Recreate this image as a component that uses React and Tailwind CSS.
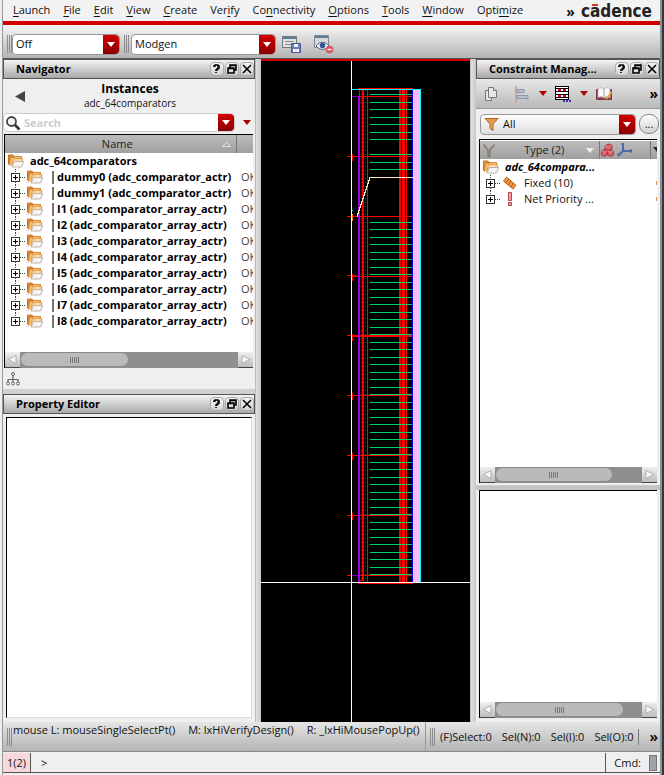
import React from "react";

const MENUS = [
  ["", "L", "aunch"],
  ["", "F", "ile"],
  ["", "E", "dit"],
  ["", "V", "iew"],
  ["", "C", "reate"],
  ["Ver", "i", "fy"],
  ["Co", "n", "nectivity"],
  ["", "O", "ptions"],
  ["", "T", "ools"],
  ["", "W", "indow"],
  ["Opti", "m", "ize"],
];

const INSTANCES = [
  "dummy0 (adc_comparator_actr)",
  "dummy1 (adc_comparator_actr)",
  "I1 (adc_comparator_array_actr)",
  "I2 (adc_comparator_array_actr)",
  "I3 (adc_comparator_array_actr)",
  "I4 (adc_comparator_array_actr)",
  "I5 (adc_comparator_array_actr)",
  "I6 (adc_comparator_array_actr)",
  "I7 (adc_comparator_array_actr)",
  "I8 (adc_comparator_array_actr)",
];

function Folder() {
  return (
    <svg width="16" height="14" viewBox="0 0 16 14" className="shrink-0" aria-hidden="true">
      <path d="M.5 10.500V1h4.500l1 1.500h6.500v3" fill="#e0903a" stroke="#bf7424" />
      <path d="M1.500 11.500 2.500 3.500H6l1-1h6.500V6.500" fill="#fbc67c" stroke="#d0842f" />
      <path d="M3.500 12 5.500 5l1-.500h8V8" fill="#fdd9a3" stroke="#d48b3a" strokeWidth=".8" />
      <path d="M4 13 6.500 7.500h9L13.500 13z" fill="#f6f4f2" stroke="#b5aca2" strokeWidth=".9" />
    </svg>
  );
}

function Expander({ last = false }) {
  return (
    <button type="button" aria-label="Expand" className="block h-4 w-[17px] shrink-0">
      <svg width="17" height="16" viewBox="0 0 17 16" shapeRendering="crispEdges" aria-hidden="true">
        <path d={last ? "M5.500 0v4" : "M5.500 0v4M5.500 13v3"} stroke="#444" strokeDasharray="1 1" />
        <path d="M10 8.500h6" stroke="#444" strokeDasharray="1 1" />
        <rect x="1.500" y="4.500" width="8" height="8" fill="#fff" stroke="#333" />
        <path d="M3 8.500h5M5.500 6v5" stroke="#000" />
      </svg>
    </button>
  );
}

function Grip() {
  return (
    <svg width="5" height="18" viewBox="0 0 5 18" className="shrink-0" shapeRendering="crispEdges" aria-hidden="true">
      <path d="M.5 0v18M2.500 0v18M4.500 0v18" stroke="#8c8c8c" />
    </svg>
  );
}

function Down({ className }) {
  return (
    <svg width="8" height="5" viewBox="0 0 8 5" className={className} aria-hidden="true">
      <path d="M0 0h8L4 5z" fill="currentColor" />
    </svg>
  );
}

function RedCap() {
  return (
    <span className="pointer-events-none flex w-4 shrink-0 items-center justify-center self-stretch rounded-r-[4px] bg-linear-to-b from-[#d40000] to-[#8a0000] text-white">
      <Down />
    </span>
  );
}

function Combo({ label, value, className }) {
  return (
    <div className={"flex h-[21px] rounded-[4px] border border-[#999] bg-white " + className}>
      <select
        aria-label={label}
        className="min-w-0 flex-1 appearance-none bg-transparent pl-[3px] outline-none"
        defaultValue={value}
      >
        <option>{value}</option>
      </select>
      <RedCap />
    </div>
  );
}

const WINDOW_GLYPHS = {
  Help: "M4 5V4h1V3h3v1h1v2H8v1H7v1H6v1M6 10v1",
  Float: "M5 6V3h6v5H9M5 3.500h6M3 6h6v5H3zM3 6.500h6",
  Close: "M3 3l8 8M11 3l-8 8",
};

function TitleBar({ children }) {
  return (
    <div className="flex h-5 shrink-0 items-center border border-[#555] bg-linear-to-b from-[#f4f4f4] to-[#a9a9a9] pb-px pl-3">
      <h2 className="min-w-0 flex-1 font-bold whitespace-nowrap text-black">{children}</h2>
      <div className="flex gap-px">
        {Object.entries(WINDOW_GLYPHS).map(([name, d]) => (
          <button
            key={name}
            type="button"
            aria-label={name}
            className="h-[14px] w-[14px] rounded-[4px] border border-[#aaa] bg-linear-to-b from-[#f4f4f4] to-[#d2d2d2]"
          >
            <svg width="12" height="12" viewBox="1 1 12 12" aria-hidden="true">
              <path d={d} fill="none" stroke="#000" strokeWidth="1.600" />
            </svg>
          </button>
        ))}
      </div>
    </div>
  );
}

function ScrollArrow({ d, label }) {
  return (
    <button
      type="button"
      aria-label={label}
      className="flex w-[15px] shrink-0 items-center justify-center border-b border-[#444] bg-linear-to-b from-[#f0f0f0] to-[#bdbdbd]"
    >
      <svg width="9" height="9" viewBox="0 0 9 9" aria-hidden="true">
        <path d={d} fill="#f8f8f8" stroke="#999" strokeWidth=".7" />
      </svg>
    </button>
  );
}

function ScrollBar({ thumb }) {
  return (
    <div className="flex h-4 shrink-0 bg-[#8f8f8f]">
      <ScrollArrow d="M8 .5v8L.5 4.500z" label="Scroll left" />
      <div className="flex min-w-0 flex-1">
        <div
          className={
            "flex h-[15px] items-center justify-center rounded-full border border-[#8a8a8a] bg-[#bababa] " + thumb
          }
        >
          <svg width="9" height="6" viewBox="0 0 9 6" shapeRendering="crispEdges" aria-hidden="true">
            <path d="M.5 0v6M2.500 0v6M4.500 0v6M6.500 0v6M8.500 0v6" stroke="#777" />
          </svg>
        </div>
      </div>
      <ScrollArrow d="M1 .5v8l7.500-4z" label="Scroll right" />
    </div>
  );
}

function Splitter() {
  return <div className="w-[6px] shrink-0 border-l border-[#bbb] bg-linear-to-r from-[#e2e2e2] to-[#c6c6ce]" />;
}

function NavigatorPanel() {
  return (
    <section className="flex shrink-0 flex-col">
      <TitleBar>Navigator</TitleBar>
      <div className="flex h-[34px] shrink-0 items-center px-3">
        <button type="button" aria-label="Back">
          <svg width="10" height="11" viewBox="0 0 10 11" aria-hidden="true">
            <path d="M10 0v11L0 5.500z" fill="#444" />
          </svg>
        </button>
        <div className="flex-1 pr-2 text-center leading-[14px]">
          <h3 className="text-[12px] font-bold text-black">Instances</h3>
          <p className="text-[10px]">adc_64comparators</p>
        </div>
      </div>
      <div className="flex h-[19px] shrink-0 items-center">
        <div className="flex h-[19px] min-w-0 flex-1 items-center rounded-[4px] border border-[#ccc] bg-white">
          <svg width="18" height="16" viewBox="0 0 18 16" className="shrink-0" aria-hidden="true">
            <circle cx="7.500" cy="6.500" r="4.500" fill="#f4f4f4" stroke="#444" strokeWidth="1.800" />
            <path d="m11 10 4.500 4.500" stroke="#333" strokeWidth="2.600" />
          </svg>
          <input
            aria-label="Search instances"
            className="min-w-0 flex-1 pl-[2px] font-bold outline-none placeholder:text-[#ccc]"
            placeholder="Search"
          />
          <RedCap />
        </div>
        <button type="button" aria-label="Search options" className="flex w-5 justify-center pl-[3px] text-[#b00000]">
          <Down />
        </button>
      </div>
      <div className="mt-[2px] mr-[2px] ml-px flex h-[234px] shrink-0 flex-col border-t border-l border-black bg-white">
        <div className="min-h-0 flex-1 overflow-hidden">
          <table className="w-full table-fixed border-collapse">
            <colgroup>
              <col />
              <col className="w-[17px]" />
            </colgroup>
            <thead>
              <tr className="h-[18px] bg-linear-to-b from-[#bcbcbc] to-[#a0a0a0]">
                <th className="border-r border-[#777] p-0 font-normal text-[#222]">
                  <div className="flex items-center pr-[5px]">
                    <span className="flex-1 pl-2">Name</span>
                    <svg width="9" height="5" viewBox="0 0 9 5" aria-hidden="true">
                      <path d="M.5 4.500h8l-4-4z" fill="#aaa" stroke="#eee" strokeWidth=".8" />
                    </svg>
                  </div>
                </th>
                <th className="p-0" aria-label="Status" />
              </tr>
            </thead>
            <tbody className="text-black">
              <tr className="h-4">
                <td className="p-0">
                  <div className="flex h-4 items-center gap-[6px] pl-[3px] font-bold">
                    <Folder />
                    <span>adc_64comparators</span>
                  </div>
                </td>
                <td className="p-0" />
              </tr>
              {INSTANCES.map((name, i) => (
                <tr key={name} className="h-4">
                  <td className="p-0">
                    <div className="flex h-4 items-center pl-[5px] font-bold whitespace-nowrap">
                      <Expander last={i === INSTANCES.length - 1} />
                      <Folder />
                      <span className="ml-[9px] h-[13px] w-[2px] bg-[#777]" />
                      <span className="pl-[3px]">{name}</span>
                    </div>
                  </td>
                  <td className="overflow-hidden p-0 pl-[5px]">
                    <div className="h-4 w-[12px] overflow-hidden leading-4 text-[#444]">OK</div>
                  </td>
                </tr>
              ))}
            </tbody>
          </table>
        </div>
        <ScrollBar thumb="w-1/2" />
      </div>
      <div className="flex h-[21px] shrink-0 items-center pl-[3px]">
        <button type="button" aria-label="Show hierarchy">
          <svg width="14" height="14" viewBox="0 0 14 14" fill="none" stroke="#666" aria-hidden="true">
            <path d="M7 3v7M2 10V7.500h10V10" strokeWidth="1.200" />
            <circle cx="7" cy="2" r="1.500" />
            <circle cx="2" cy="11.500" r="1.500" />
            <circle cx="7" cy="11.500" r="1.500" />
            <circle cx="12" cy="11.500" r="1.500" />
          </svg>
        </button>
      </div>
    </section>
  );
}

const GREEN_ROWS = [];
for (let y = 94.5; y < 582; y += 7.5) {
  const row = Math.floor(y + 0.25);
  if (row === 147 || (row > 170 && row < 220)) continue;
  GREEN_ROWS.push(row);
}

const TAPS = [156, 216, 276, 336, 395, 455, 515];

function LayoutCanvas() {
  return (
    <main className="flex min-w-0 flex-1 bg-black">
      <svg
        className="h-[663px] min-w-0 flex-1"
        viewBox="261 59 209 663"
        preserveAspectRatio="xMidYMid slice"
        shapeRendering="crispEdges"
        role="img"
        aria-label="Layout canvas"
      >
        <rect x="261" y="59" width="209" height="2" fill="#d00000" />
        <g fill="#f00">
          <rect x="358" y="88" width="55" height="1" />
          <rect x="359" y="89" width="1" height="493" />
          <rect x="362" y="90" width="2" height="490" />
          <rect x="367" y="90" width="1" height="492" />
          <rect x="399" y="90" width="2" height="492" />
          <rect x="402" y="90" width="3" height="492" />
          <rect x="406" y="90" width="1" height="492" />
          <rect x="359" y="96" width="53" height="1" />
          <rect x="347" y="575" width="65" height="1" />
          <rect x="358" y="580" width="6" height="1" />
          <rect x="358" y="583" width="55" height="1" />
        </g>
        <path d="M361.500 90v490M365.500 90v490" stroke="#f00" strokeDasharray="1 3" />
        {GREEN_ROWS.map((y) => (
          <rect key={y} x="370" y={y} width="43" height="1" fill="#00d26a" />
        ))}
        {TAPS.map((y) => (
          <g key={y} fill="#f00">
            <rect x="347" y={y === 276 || y === 336 ? y - 1 : y} width="9" height="1" />
            <rect x="352" y={y === 336 ? y - 1 : y} width="60" height={y === 336 ? 2 : 1} />
            <rect x="352" y={y - 2} width="1" height="7" />
          </g>
        ))}
        <rect x="358" y="96" width="1" height="486" fill="#a000d8" />
        <path d="M352 96.500h6M352 575.500h6" stroke="#7000c8" />
        <rect x="412" y="90" width="1" height="492" fill="#00f" />
        <rect x="413" y="90" width="7" height="492" fill="#ffb9f4" />
        <path d="M352 89.500h69M420.500 89v493" stroke="#0ff" />
        <path d="M415 177.500h-45l-13 39" fill="none" stroke="#ffe8c0" />
        <rect x="351" y="210" width="2" height="1" fill="#0ff" />
        <rect x="352" y="214" width="1" height="7" fill="#f80" />
        <path d="M351.500 61v661M261 582.500h209" stroke="#fff" />
      </svg>
    </main>
  );
}

function ConstraintPanel() {
  return (
    <section className="flex h-[424px] shrink-0 flex-col">
      <TitleBar>Constraint Manag...</TitleBar>
      <div className="flex h-[30px] shrink-0 items-center border-b border-[#999] bg-linear-to-b from-[#e8e8e8] to-[#b9b9b9] pr-[2px] pl-2 text-[#b00000]">
        <button type="button" aria-label="Copy">
          <svg width="14" height="16" viewBox="0 0 14 16" fill="#e6e6e6" stroke="#777" aria-hidden="true">
            <path d="M1.500 4.500h6v10h-6z" />
            <path d="M4.500 1.500h5l3 3v7h-8z" />
            <path d="M9.500 1.500v3h3" />
          </svg>
        </button>
        <button type="button" aria-label="Align" className="ml-4">
          <svg width="16" height="16" viewBox="0 0 16 16" aria-hidden="true">
            <path d="M2 0v16" stroke="#c99a9e" strokeWidth="1.600" />
            <path d="M3 3.500h7v3H3zM3 9.500h11v3H3z" fill="#b6c0cc" stroke="#8a9aae" />
          </svg>
        </button>
        <button type="button" aria-label="Align options" className="ml-[9px]">
          <Down />
        </button>
        <button type="button" aria-label="Module generator" className="ml-2">
          <svg width="17" height="16" viewBox="0 0 17 16" shapeRendering="crispEdges" aria-hidden="true">
            <path d="M0 0h14v14H0z" fill="#000" />
            <path d="M1 1h12v1H1zM1 6h12v2H1zM1 12h12v1H1zM1 3h2v2H1zM11 3h2v2h-2zM6 3h2v2H6zM1 9h2v2H1zM11 9h2v2h-2zM6 9h2v2H6z" fill="#fff" />
            <path d="M3 3h3v2H3zM8 3h3v2H8zM3 9h3v2H3zM8 9h3v2H8z" fill="#e00030" />
            <path d="M8 14h2v2H8zM11 14h2v2h-2zM14 14h2v2h-2z" fill="#4030c0" />
          </svg>
        </button>
        <button type="button" aria-label="Module options" className="ml-2">
          <Down />
        </button>
        <button type="button" aria-label="Edit constraints" className="ml-2">
          <svg width="17" height="14" viewBox="0 0 17 14" aria-hidden="true">
            <path d="M.5 2.500h15v10H.5z" fill="#a04050" stroke="#7c3440" />
            <path d="M2 1.500c2-1 4-1 6 .5v9c-2-1.500-4-1.500-6-.5zM8 2c2-1.500 4-1.500 6-.5v9c-2-1-4-1-6 .5z" fill="#fafafa" stroke="#aaa" strokeWidth=".7" />
            <path d="m10 12 5.500-7" stroke="#e8b040" strokeWidth="2" />
          </svg>
        </button>
        <button type="button" aria-label="More tools" className="ml-auto text-[14px] leading-4 font-bold text-black">
          »
        </button>
      </div>
      <div className="flex h-[30px] shrink-0 items-center gap-[3px] pr-px pl-1">
        <div className="flex h-[21px] min-w-0 flex-1 rounded-[4px] border border-[#999] bg-linear-to-b from-white to-[#ddd]">
          <svg width="16" height="19" viewBox="0 0 16 19" className="ml-[3px] shrink-0" aria-hidden="true">
            <path d="M1 3.500h13L9 9v6.500l-3-2V9z" fill="#eb9b4f" stroke="#a9682c" />
          </svg>
          <select
            aria-label="Filter"
            className="min-w-0 flex-1 appearance-none bg-transparent pl-[3px] outline-none"
            defaultValue="All"
          >
            <option>All</option>
          </select>
          <RedCap />
        </div>
        <button type="button" className="flex h-5 w-5 items-center justify-center rounded-[9px] border border-[#888] bg-linear-to-b from-white to-[#d0d0d0] pb-px leading-4">
          ...
        </button>
      </div>
      <div className="mr-[3px] ml-[3px] flex min-h-0 flex-1 flex-col border-t border-l border-black bg-white pt-px">
        <div className="min-h-0 flex-1 overflow-hidden">
          <table className="w-full table-fixed border-collapse">
            <colgroup>
              <col />
              <col className="w-[51px]" />
              <col className="w-[7px]" />
            </colgroup>
            <thead>
              <tr className="h-[18px] bg-linear-to-b from-[#bcbcbc] to-[#a0a0a0]">
                <th className="border-r border-[#777] p-0 font-normal text-[#222]">
                  <div className="flex items-center pr-[5px] pl-[3px]">
                    <svg width="12" height="13" viewBox="0 0 12 13" fill="none" stroke="#85775f" strokeWidth="1.400" aria-hidden="true">
                      <path d="M.5.500 5 6v6.500h2V6L11.500.500" />
                    </svg>
                    <span className="flex-1 pl-2">Type (2)</span>
                    <Down className="text-[#eee]" />
                  </div>
                </th>
                <th className="border-r border-[#777] p-0" aria-label="Objects">
                  <div className="flex items-center gap-[3px] pl-px">
                    <svg width="13" height="14" viewBox="0 0 13 14" fill="#d95c64" stroke="#a33c44" aria-hidden="true">
                      <path d="m4 3 3-2 4 1v4L8 7.500 4 6.500zM.5 8l3-1.500L6 8v4l-2.500 1.500-3-1.500zM6.500 8l3-1.500 3 1.500v4l-3 1.500-3-1.500z" />
                      <path d="M4 3l3.500 1.500L11 2M.5 8l3 1.500L6 8M6.500 8l3 1.500 3-1.500" fill="none" stroke="#f6a3a8" strokeWidth=".7" />
                    </svg>
                    <svg width="15" height="14" viewBox="0 0 15 14" fill="none" stroke="#4d69a8" strokeWidth="2" aria-hidden="true">
                      <path d="M6 0v8l-5 5M6 8h9" />
                      <path d="M4 1h3M1 10v3M14 6v4" strokeWidth="1.200" />
                    </svg>
                  </div>
                </th>
                <th className="p-0" aria-label="Flags">
                  <svg width="6" height="10" viewBox="0 0 6 10" aria-hidden="true">
                    <path d="M2 2h4v5z" fill="#222" />
                  </svg>
                </th>
              </tr>
            </thead>
            <tbody>
              <tr className="h-4">
                <td className="p-0" colSpan="3">
                  <div className="flex h-4 items-center gap-[6px] pl-[3px] font-bold text-black italic">
                    <Folder />
                    <span>adc_64compara...</span>
                  </div>
                </td>
              </tr>
              <tr className="h-4">
                <td className="p-0" colSpan="3">
                  <div className="flex h-4 items-center pl-[5px]">
                    <Expander />
                    <svg width="16" height="14" viewBox="0 0 16 14" aria-hidden="true">
                      <path d="M4.500 1 14 9.500l-3 3.500L1.500 5z" fill="#f29a3c" stroke="#b35c14" />
                      <path d="m6.500 3-2.500 4M9 5 6.500 9M11.500 7 9 11" stroke="#b35c14" />
                    </svg>
                    <span className="flex-1 pl-[6px]">Fixed (10)</span>
                    <span className="h-1 w-px bg-[#d99a60]" />
                  </div>
                </td>
              </tr>
              <tr className="h-4">
                <td className="p-0" colSpan="3">
                  <div className="flex h-4 items-center pl-[5px]">
                    <Expander last />
                    <svg width="16" height="14" viewBox="0 0 16 14" aria-hidden="true">
                      <path d="M6.500.500h3v8h-3zM6.500 10.500h3v3h-3z" fill="#eca0a4" stroke="#b4484e" />
                    </svg>
                    <span className="flex-1 pl-[6px]">Net Priority ...</span>
                    <span className="h-1 w-px bg-[#d99a60]" />
                  </div>
                </td>
              </tr>
            </tbody>
          </table>
        </div>
        <ScrollBar thumb="w-4/5" />
      </div>
    </section>
  );
}

export default function App() {
  return (
    <div className="flex min-h-screen bg-white font-[Open_Sans,Noto_Sans,sans-serif] text-[11px] leading-4 text-[#111]">
      <div className="w-[3px] shrink-0 border-r border-[#999] bg-[#eee]" />
      <div className="flex min-w-0 flex-1 flex-col bg-[#efefef]">
        <header className="flex h-[25px] shrink-0 items-start border-b-4 border-[#d00000] bg-[#f2f2f2] pr-2 pl-[10px]">
          <nav className="flex gap-[13px] pt-[2px]">
            {MENUS.map(([before, key, after]) => (
              <button key={before + key + after} type="button" className="whitespace-nowrap">
                {before}
                <span className="underline underline-offset-2">{key}</span>
                {after}
              </button>
            ))}
          </nav>
          <button type="button" aria-label="More menus" className="mr-[6px] ml-auto pt-1 text-[14px] leading-4 font-bold">
            »
          </button>
          <div className="pt-px font-[DejaVu_Sans_Condensed,sans-serif] text-[17px] leading-5 font-bold text-[#222]">
            c
            <span className="relative">
              a
              <span className="absolute top-[3px] left-[2px] h-[2px] w-[6px] bg-[#e03030]" />
            </span>
            dence
          </div>
        </header>
        <div className="mt-[5px] flex h-[29px] shrink-0 items-center border-b border-[#555] bg-linear-to-b from-[#ececec] to-[#b4b4b4] pl-1">
          <Grip />
          <Combo label="Snap mode" value="Off" className="w-[108px]" />
          <span className="ml-1 flex">
            <Grip />
          </span>
          <Combo label="Workspace" value="Modgen" className="ml-[2px] w-[145px]" />
          <button type="button" aria-label="Save workspace" className="ml-[6px]">
            <svg width="20" height="19" viewBox="0 0 20 19" aria-hidden="true">
              <path d="M.5 1.500h14v11H.5z" fill="#e2e2e2" stroke="#777" />
              <path d="M1 3h13" stroke="#557f9c" strokeWidth="2" />
              <path d="M3 6.500h9M3 9.500h6" stroke="#888" />
              <path d="M9.500 8.500h9v9h-9z" fill="#6d7fb8" stroke="#475798" />
              <path d="M12 9h4v3h-4zM11 14h6v3h-6z" fill="#eef1fa" />
            </svg>
          </button>
          <button type="button" aria-label="Hide workspace" className="ml-[11px]">
            <svg width="21" height="20" viewBox="0 0 21 20" aria-hidden="true">
              <path d="M1.500 1.500h14v12h-14z" fill="#d8d8d8" stroke="#888" />
              <path d="M2 3h13" stroke="#557f9c" strokeWidth="2" />
              <path d="M3 12c4-5 9-5 13 0-4 4.500-9 4.500-13 0z" fill="#f4f6fa" stroke="#42608e" />
              <circle cx="9.500" cy="11.500" r="2.800" fill="#34578e" />
              <circle cx="16.500" cy="15.500" r="3.800" fill="#d9555a" />
              <path d="M14.500 15.500h4" stroke="#fff" strokeWidth="1.500" />
            </svg>
          </button>
        </div>
        <div className="flex flex-1">
          <aside className="flex w-[252px] shrink-0 flex-col">
            <NavigatorPanel />
            <div className="h-[5px] shrink-0 bg-[#d0d0d4]" />
            <section className="flex flex-1 flex-col">
              <TitleBar>Property Editor</TitleBar>
              <div className="mx-[3px] mt-[3px] mb-1 flex-1 border border-t-black border-r-[#ddd] border-b-[#ddd] border-l-black bg-white" />
            </section>
          </aside>
          <Splitter />
          <LayoutCanvas />
          <Splitter />
          <aside className="flex w-[184px] shrink-0 flex-col">
            <ConstraintPanel />
            <div className="mt-[2px] h-[5px] shrink-0 border-t border-[#ccc] bg-[#c4c4c4]" />
            <div className="mr-[3px] mb-1 ml-[3px] flex flex-1 flex-col justify-end border-t border-l border-black bg-white">
              <ScrollBar thumb="w-7/8" />
            </div>
          </aside>
        </div>
        <div className="flex h-[30px] shrink-0 border-b border-[#888] bg-linear-to-b from-[#e6e6e6] to-[#b4b4b4] whitespace-nowrap">
          <div className="flex min-w-0 flex-1 items-center border-r border-[#999] pl-1">
            <Grip />
            <div className="flex gap-[13px] self-start pl-px">
              <span>mouse L: mouseSingleSelectPt()</span>
              <span>M: lxHiVerifyDesign()</span>
              <span>R: _lxHiMousePopUp()</span>
            </div>
          </div>
          <div className="flex w-[234px] shrink-0 items-center gap-[10px] pr-[2px] pl-1">
            <div className="flex items-center gap-[5px]">
              <Grip />
              <span>(F)Select:0</span>
            </div>
            <span>Sel(N):0</span>
            <span>Sel(I):0</span>
            <span className="border-r border-[#777] pr-1">Sel(O):0</span>
            <button type="button" aria-label="More status" className="ml-auto text-[14px] leading-4 font-bold">
              »
            </button>
          </div>
        </div>
        <footer className="mt-px mb-[2px] flex h-5 shrink-0 items-center border-b border-[#555]">
          <span className="flex h-full items-center border-r border-[#555] bg-[#f8d8da] px-1">1(2)</span>
          <label className="flex min-w-0 flex-1 items-center pl-[10px]">
            <span>&gt;</span>
            <input className="min-w-0 flex-1 bg-transparent pl-1 outline-none" aria-label="Command" />
          </label>
          <span className="flex h-full items-center border-l border-[#555] px-2">Cmd:</span>
          <span className="mr-[3px] h-4 w-2 border border-[#777] bg-[#a2a2aa]" />
        </footer>
      </div>
      <div className="flex w-1 shrink-0 bg-[#8c9298]">
        <div className="ml-auto w-[2px] bg-[#32373c]" />
      </div>
    </div>
  );
}
